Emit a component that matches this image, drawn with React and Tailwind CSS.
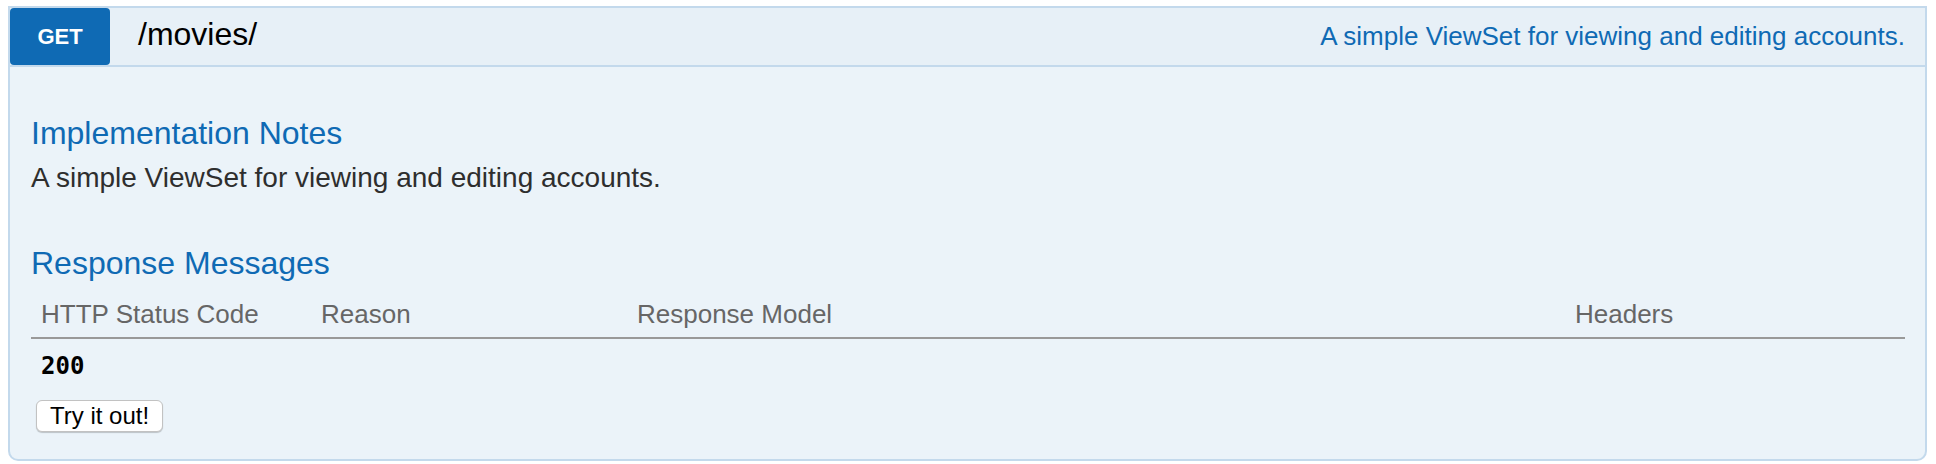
export default function App() {
  const sans = { fontFamily: '"Liberation Sans", Arial, Helvetica, sans-serif' };
  return (
    <div className="w-[1936px] h-[464px] bg-white pt-[6px] pl-[8px] pr-[9px]" style={sans}>
      <div className="flex flex-col">
        {/* Heading */}
        <div className="flex h-[61px] border-2 border-[#c3d9ec] bg-[#e7f0f7]">
          <div className="w-[100px] h-full bg-[#0f6ab4] rounded-[4px] text-white font-bold text-[22px] leading-[24px] text-center pt-[17px]">
            GET
          </div>
          <div className="ml-[28px] mt-[6px] text-[32px] leading-[40px] text-black">/movies/</div>
          <div className="ml-auto mr-[20px] mt-[12px] text-[26px] leading-[32px] text-[#0f6ab4]">
            A simple ViewSet for viewing and editing accounts.
          </div>
        </div>
        {/* Content */}
        <div className="border-2 border-t-0 border-[#c3d9ec] bg-[#ebf3f9] rounded-b-[10px] pl-[21px] pr-[20px] pt-[46px] pb-[27px]">
          <h4 className="text-[32px] leading-[40px] text-[#0f6ab4]">Implementation Notes</h4>
          <p className="mt-[7px] text-[28px] leading-[36px] text-[#2e2e2e]">
            A simple ViewSet for viewing and editing accounts.
          </p>
          <h4 className="mt-[47px] text-[32px] leading-[40px] text-[#0f6ab4]">Response Messages</h4>
          <div className="mt-[13px] grid grid-cols-[280px_316px_938px_1fr] border-b-2 border-[#999999] text-[26px] leading-[36px] text-[#666666]">
            <div className="pl-[10px] pb-[5px]">HTTP Status Code</div>
            <div className="pl-[10px] pb-[5px]">Reason</div>
            <div className="pl-[10px] pb-[5px]">Response Model</div>
            <div className="pl-[10px] pb-[5px]">Headers</div>
          </div>
          <div className="grid grid-cols-[280px_316px_938px_1fr]">
            <div
              className="pl-[10px] pt-[11px] text-[24px] leading-[32px] font-bold text-black"
              style={{ fontFamily: '"DejaVu Sans Mono", "Liberation Mono", monospace' }}
            >
              200
            </div>
            <div></div>
            <div></div>
            <div></div>
          </div>
          <button className="mt-[18px] ml-[5px] h-[32px] px-[13px] bg-white border border-[#c2c2c2] rounded-[6px] shadow-[0_1px_1px_rgba(0,0,0,0.2)] text-[24px] leading-[30px] text-black">
            Try it out!
          </button>
        </div>
      </div>
    </div>
  );
}
